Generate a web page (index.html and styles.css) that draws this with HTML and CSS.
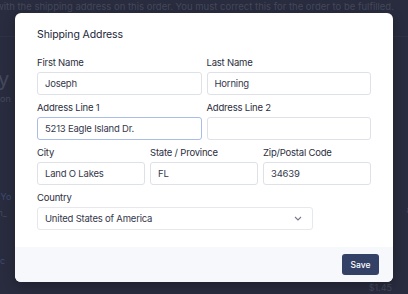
FILE: index.html
```html
<!DOCTYPE html>
<html lang="en">
<head>
    <meta charset="UTF-8">
    <meta name="viewport" content="width=device-width, initial-scale=1.0">
    <title>Shipping Address</title>
    <link rel="stylesheet" href="styles.css">
</head>
<body>
    <div class="page">
        <p class="page-note">with the shipping address on this order. You must correct this for the order to be fulfilled.</p>
        <div class="page-rule"></div>
        <div class="page-left">
            <span class="big">y</span>
            <span class="small">2 on</span>
            <span class="small link spaced">K Yo</span>
            <span class="small">on_</span>
            <span class="small link last">tec</span>
        </div>
        <div class="page-right">
            <span class="small">0</span>
            <span class="small">a.</span>
            <span class="small price">$1.45</span>
        </div>
    </div>

    <div class="overlay">
        <div class="modal">
            <div class="modal-body">
                <h2 class="modal-title">Shipping Address</h2>
                <div class="row two">
                    <div class="field">
                        <label>First Name</label>
                        <input type="text" value="Joseph">
                    </div>
                    <div class="field">
                        <label>Last Name</label>
                        <input type="text" value="Horning">
                    </div>
                </div>
                <div class="row two">
                    <div class="field">
                        <label>Address Line 1</label>
                        <input type="text" class="focused" value="5213 Eagle Island Dr.">
                    </div>
                    <div class="field">
                        <label>Address Line 2</label>
                        <input type="text" value="">
                    </div>
                </div>
                <div class="row three">
                    <div class="field">
                        <label>City</label>
                        <input type="text" value="Land O Lakes">
                    </div>
                    <div class="field">
                        <label>State / Province</label>
                        <input type="text" value="FL">
                    </div>
                    <div class="field">
                        <label>Zip/Postal Code</label>
                        <input type="text" value="34639">
                    </div>
                </div>
                <div class="row">
                    <div class="field country">
                        <label>Country</label>
                        <div class="select">
                            <span>United States of America</span>
                            <svg width="8" height="5" viewBox="0 0 8 5"><path d="M1 1l3 3 3-3" fill="none" stroke="#767b8c" stroke-width="1.1"/></svg>
                        </div>
                    </div>
                </div>
            </div>
            <div class="modal-footer">
                <button class="save">Save</button>
            </div>
        </div>
    </div>
</body>
</html>
```

FILE: styles.css
```css
body {
    margin: 0;
    font-family: Inter, "Noto Sans", sans-serif;
    background-color: #292c3e;
    width: 408px;
    height: 294px;
    overflow: hidden;
}

.page {
    position: relative;
    height: 294px;
    color: #44485c;
}

.page-note {
    margin: 0;
    padding: 1px 0 0 0;
    font-size: 9.5px;
    line-height: 11px;
    white-space: nowrap;
    margin-left: -4px;
}

.page-rule {
    margin-top: 24px;
    height: 1px;
    background-color: #2f3245;
}

.page-left {
    display: flex;
    flex-direction: column;
    width: 15px;
    overflow: hidden;
    padding-top: 32px;
}

.page-left .big {
    font-size: 20px;
    line-height: 20px;
    margin-left: -2px;
}

.small {
    font-size: 9px;
    line-height: 12px;
    white-space: nowrap;
}

.page-left .small {
    margin-left: -8px;
    margin-top: 4px;
}

.page-left .spaced {
    margin-top: 86px;
}

.page-left .last {
    margin-top: 36px;
}

.link {
    color: #3e4a72;
}

.page-right {
    position: absolute;
    right: -6px;
    top: 192px;
    display: flex;
    flex-direction: column;
    align-items: flex-end;
}

.page-right .price {
    margin-top: 66px;
    margin-right: 22px;
}

.overlay {
    position: absolute;
    top: 0;
    left: 0;
    width: 408px;
    height: 294px;
}

.modal {
    margin: 13px 0 0 15px;
    width: 378px;
    height: 269px;
    background-color: #fff;
    border-radius: 6px;
    overflow: hidden;
    display: flex;
    flex-direction: column;
    box-shadow: 0 4px 12px rgba(0, 0, 0, 0.25);
}

.modal-body {
    flex: 1;
    padding: 15px 22px 0 22px;
}

.modal-title {
    margin: 0 0 16px 0;
    font-size: 10.5px;
    font-weight: 400;
    line-height: 13px;
    color: #23263a;
    letter-spacing: -0.1px;
}

.row {
    display: grid;
    gap: 5px;
    margin-bottom: 7px;
}

.row.two {
    grid-template-columns: 1fr 1fr;
}

.row.three {
    grid-template-columns: 1fr 1fr 1fr;
}

.field {
    display: flex;
    flex-direction: column;
}

label {
    font-size: 9.5px;
    line-height: 12px;
    color: #2b2e40;
    margin-bottom: 3px;
    letter-spacing: -0.2px;
}

input {
    box-sizing: border-box;
    width: 100%;
    height: 23px;
    border: 1px solid #dfe1e8;
    border-radius: 3px;
    padding: 0 7px;
    font-family: Inter, "Noto Sans", sans-serif;
    font-size: 9.5px;
    font-weight: 400;
    color: #35384b;
    outline: none;
    letter-spacing: -0.2px;
    background-color: #fff;
}

.field input.focused {
    border: 1px solid #aabde7;
}

.country {
    width: 276px;
}

.select {
    box-sizing: border-box;
    height: 23px;
    border: 1px solid #e6e8ee;
    border-radius: 3px;
    padding: 0 10px 0 7px;
    display: flex;
    align-items: center;
    justify-content: space-between;
    font-size: 9.5px;
    color: #35384b;
    letter-spacing: -0.2px;
}

.modal-footer {
    height: 35px;
    background-color: #f7f8fc;
    display: flex;
    align-items: center;
    justify-content: flex-end;
    padding-right: 14px;
}

.save {
    width: 37px;
    height: 21px;
    border: none;
    border-radius: 3px;
    background-color: #344166;
    color: #fff;
    font-family: Inter, "Noto Sans", sans-serif;
    font-size: 8.5px;
    font-weight: 500;
    padding: 0;
}
```
